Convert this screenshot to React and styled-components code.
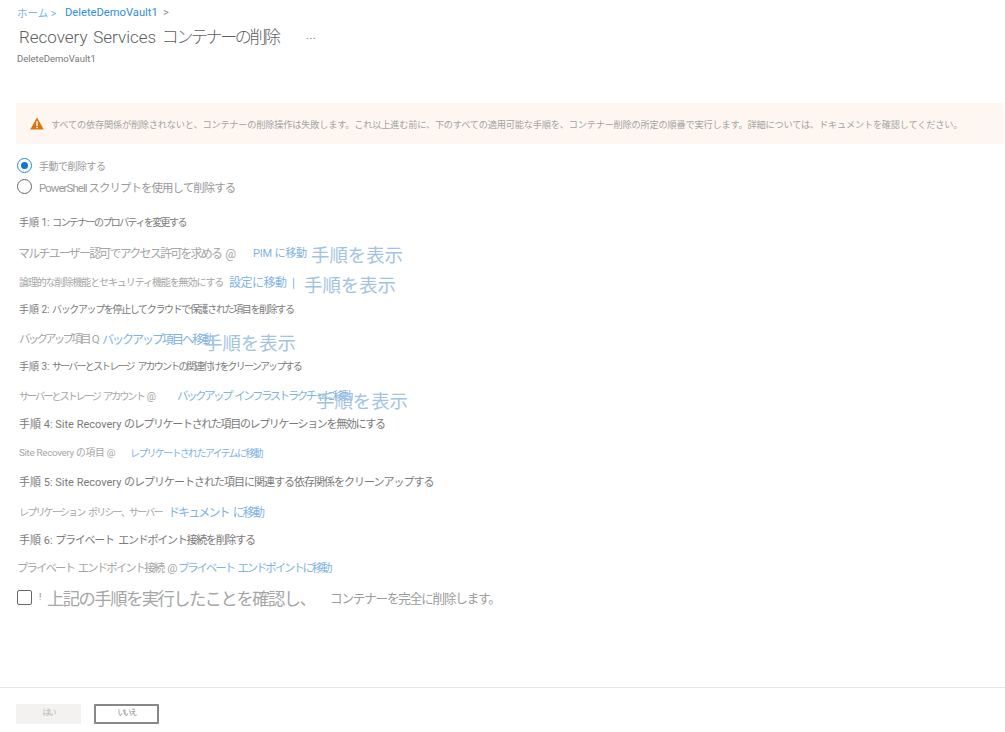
import React from 'react';
import styled, { createGlobalStyle } from 'styled-components';

const GlobalStyle = createGlobalStyle`
  html, body { margin: 0; padding: 0; background: #fff; }
  body { font-family: Roboto, "Noto Sans CJK JP", sans-serif; color: #8a8886; }
`;

const Page = styled.div`
  width: 1005px;
  height: 732px;
  overflow: hidden;
  display: flex;
  flex-direction: column;
`;

const Breadcrumb = styled.nav`
  display: flex;
  align-items: center;
  height: 16px;
  margin-top: 4px;
  padding-left: 17px;
  font-size: 11px;
`;

const Crumb = styled.a`
  color: ${p => p.$strong ? '#2f8fe0' : '#7db4e6'};
  width: ${p => p.$w}px;
  font-size: ${p => p.$strong ? 11.2 : 10.5}px;
  white-space: nowrap;
`;

const Chevron = styled.span`
  color: #8a8886;
  margin-left: 5px;
  font-size: 11px;
`;

const TitleRow = styled.div`
  display: flex;
  align-items: center;
  height: 24px;
  margin-top: 3px;
  padding-left: 19px;
`;

const Title = styled.h1`
  margin: 0;
  font-size: 17px;
  font-weight: 300;
  color: #5e5e5e;
  width: 287px;
  white-space: nowrap;
  word-spacing: 1.5px;
`;

const TitleKana = styled.span`
  letter-spacing: -2.4px;
`;

const More = styled.span`
  font-size: 11px;
  color: #777;
  letter-spacing: 0.5px;
`;

const Subtitle = styled.div`
  margin-top: 5px;
  padding-left: 17px;
  font-size: 9.5px;
  line-height: 13px;
  color: #777;
`;

const Banner = styled.div`
  display: flex;
  align-items: center;
  gap: 7px;
  height: 41px;
  margin: 38px 1px 0 16px;
  padding-left: 14px;
  background: #fef7f1;
  font-size: 9.2px;
  letter-spacing: -0.2px;
  color: #a3a3a3;
  white-space: nowrap;
`;

const RadioGroup = styled.div`
  display: flex;
  flex-direction: column;
  gap: 6px;
  margin-top: 14px;
  padding-left: 17px;
`;

const RadioRow = styled.label`
  display: flex;
  align-items: center;
  gap: 7px;
  height: 15px;
  font-size: ${p => p.$size}px;
  letter-spacing: ${p => p.$ls}px;
  color: #9a9a9a;
  white-space: nowrap;
`;

const RadioMark = styled.span`
  box-sizing: border-box;
  flex: none;
  width: 15px;
  height: 15px;
  border-radius: 50%;
  border: ${p => p.$on ? '1.5px solid #2b88d8' : '1.5px solid #666'};
  display: flex;
  align-items: center;
  justify-content: center;
  &::after {
    content: '';
    display: ${p => p.$on ? 'block' : 'none'};
    width: 7px;
    height: 7px;
    border-radius: 50%;
    background: #0f78d4;
  }
`;

const Steps = styled.div`
  margin-top: 17px;
`;

const Line = styled.div`
  display: flex;
  align-items: center;
  height: 20px;
  margin-top: ${p => p.$gap}px;
  padding-left: ${p => p.$x}px;
  white-space: nowrap;
`;

const StepTitle = styled.div`
  font-size: ${p => p.$size}px;
  color: #7a7a7a;
`;

const StepText = styled.span`
  letter-spacing: ${p => p.$ls}px;
  word-spacing: 3px;
`;

const Label = styled.span`
  flex: none;
  width: ${p => p.$w}px;
  font-size: ${p => p.$size}px;
  letter-spacing: ${p => p.$ls}px;
  word-spacing: ${p => p.$ws ?? 3}px;
  color: #a6a6a6;
`;

const GoLink = styled.a`
  flex: none;
  width: ${p => p.$w}px;
  font-size: ${p => p.$size}px;
  letter-spacing: ${p => p.$ls}px;
  word-spacing: ${p => p.$ws ?? 3}px;
  color: #7fb3e3;
`;

const ShowSteps = styled.a`
  flex: none;
  padding-top: ${p => p.$drop}px;
  font-size: 18.4px;
  line-height: 20px;
  color: #a3c3e2;
`;

const ConfirmRow = styled.label`
  display: flex;
  align-items: center;
  height: 24px;
  margin-top: 8px;
  padding-left: 17px;
  white-space: nowrap;
  color: #a6a6a6;
`;

const CheckBox = styled.span`
  box-sizing: border-box;
  flex: none;
  width: 15px;
  height: 15px;
  border: 1.5px solid #666;
  border-radius: 2px;
`;

const Tick = styled.span`
  width: 8px;
  margin-left: 7px;
  font-size: 9px;
  color: #888;
`;

const ConfirmMain = styled.span`
  width: 283px;
  font-size: 17.3px;
  letter-spacing: -1.5px;
`;

const ConfirmRest = styled.span`
  font-size: 12.6px;
  letter-spacing: -1.2px;
  color: #9c9c9c;
`;

const Footer = styled.footer`
  box-sizing: border-box;
  display: flex;
  gap: 13px;
  margin-top: auto;
  height: 45px;
  padding: 16px 0 0 16px;
  border-top: 1px solid #e6e6e6;
`;

const Button = styled.button`
  box-sizing: border-box;
  width: ${p => p.$w}px;
  height: 20px;
  padding: 0 0 5px;
  font-family: inherit;
  font-size: 8px;
  letter-spacing: -2px;
  border-radius: 1px;
  border: ${p => p.$primary ? 'none' : '2px solid #8a8886'};
  background: ${p => p.$primary ? '#f3f2f1' : '#fff'};
  color: ${p => p.$primary ? '#b5b5b5' : '#8a8886'};
`;

const rows = [
  { type: 'step', gap: 0, x: 19, size: 10, head: '手順 1: ', text: 'コンテナーのプロパティを変更する', tls: -1.6 },
  { type: 'go', gap: 11, x: 18, w: 235, size: 12, lls: -1.8, label: 'マルチユーザー認可でアクセス許可を求める @', lw: 58, ls: 11, kls: -0.2, lws: 0, link: 'PIM に移動', drop: 8 },
  { type: 'go', gap: 9, x: 19, w: 210, size: 10, lls: -1.1, label: '論理的な削除機能とセキュリティ機能を無効にする', lw: 75, ls: 12, kls: -0.5, link: '設定に移動 |', drop: 10 },
  { type: 'step', gap: 7, x: 19, size: 10, head: '手順 2: ', text: 'バックアップを停止してクラウドで保護された項目を削除する', tls: -1.36 },
  { type: 'go', gap: 10, x: 19, w: 83, size: 11.5, lls: -2.8, label: 'バックアップ項目 Q', lw: 102, ls: 12, kls: -2, link: 'バックアップ項目へ移動', drop: 12 },
  { type: 'step', gap: 7, x: 19, size: 10, head: '手順 3: ', text: 'サーバーとストレージ アカウントの関連付けをクリーンアップする', tls: -1.8 },
  { type: 'go', gap: 10, x: 19, w: 158, size: 10.3, lls: -2.2, label: 'サーバーとストレージ アカウント @', lw: 139, ls: 11.5, kls: -2.5, link: 'バックアップ インフラストラクチャに移動', drop: 14 },
  { type: 'step', gap: 8, x: 19, size: 11, head: '手順 4: Site Recovery ', text: 'のレプリケートされた項目のレプリケーションを無効にする', tls: -1.35 },
  { type: 'go', gap: 9, x: 19, w: 111, size: 9.8, lls: -0.3, ws: 0, label: 'Site Recovery の項目 @', lw: 140, ls: 10, kls: -1.7, link: 'レプリケートされたアイテムに移動' },
  { type: 'step', gap: 9, x: 19, size: 11, head: '手順 5: Site Recovery ', text: 'のレプリケートされた項目に関連する依存関係をクリーンアップする', tls: -1 },
  { type: 'go', gap: 10, x: 19, w: 149, size: 10, lls: -1.8, label: 'レプリケーション ポリシー、サーバー', lw: 100, ls: 12, kls: -1.9, link: 'ドキュメント に移動' },
  { type: 'step', gap: 8, x: 19, size: 11, head: '手順 6: ', text: 'プライベート エンドポイント接続を削除する', tls: -1.25 },
  { type: 'go', gap: 8, x: 17, w: 161, size: 11.4, lls: -1.9, label: 'プライベート エンドポイント接続 @', lw: 160, ls: 11.4, kls: -2.1, link: 'プライベート エンドポイントに移動' },
];

function WarningIcon() {
  return (
    <svg width="14" height="13" viewBox="0 0 14 13">
      <path d="M7 0.4 L13.8 12.6 L0.2 12.6 Z" fill="#d9730d" />
      <rect x="6.3" y="4.2" width="1.4" height="4.8" fill="#fff" />
      <rect x="6.3" y="9.8" width="1.4" height="1.4" fill="#fff" />
    </svg>
  );
}

export default function App() {
  return (
    <Page>
      <GlobalStyle />
      <Breadcrumb>
        <Crumb $w={48}>ホーム &gt;</Crumb>
        <Crumb $w={93} $strong>DeleteDemoVault1</Crumb>
        <Chevron>&gt;</Chevron>
      </Breadcrumb>
      <TitleRow>
        <Title>Recovery Services <TitleKana>コンテナーの削除</TitleKana></Title>
        <More>...</More>
      </TitleRow>
      <Subtitle>DeleteDemoVault1</Subtitle>
      <Banner>
        <WarningIcon />
        すべての依存関係が削除されないと、コンテナーの削除操作は失敗します。これ以上進む前に、下のすべての適用可能な手順を、コンテナー削除の所定の順番で実行します。詳細については、ドキュメントを確認してください。
      </Banner>
      <RadioGroup>
        <RadioRow $size={10} $ls={-0.5}><RadioMark $on />手動で削除する</RadioRow>
        <RadioRow $size={11.4} $ls={-0.9}><RadioMark />PowerShell スクリプトを使用して削除する</RadioRow>
      </RadioGroup>
      <Steps>
        {rows.map((r, i) => (
          <Line key={i} $gap={r.gap} $x={r.x}>
            {r.type === 'step' ? (
              <StepTitle $size={r.size}>{r.head}<StepText $ls={r.tls}>{r.text}</StepText></StepTitle>
            ) : (
              <>
                <Label $w={r.w} $size={r.size} $ls={r.lls} $ws={r.ws}>{r.label}</Label>
                <GoLink $w={r.lw} $size={r.ls} $ls={r.kls} $ws={r.lws}>{r.link}</GoLink>
                {r.drop && <ShowSteps $drop={r.drop}>手順を表示</ShowSteps>}
              </>
            )}
          </Line>
        ))}
      </Steps>
      <ConfirmRow>
        <CheckBox />
        <Tick>!</Tick>
        <ConfirmMain>上記の手順を実行したことを確認し、</ConfirmMain>
        <ConfirmRest>コンテナーを完全に削除します。</ConfirmRest>
      </ConfirmRow>
      <Footer>
        <Button $primary $w={65}>はい</Button>
        <Button $w={65}>いいえ</Button>
      </Footer>
    </Page>
  );
}
